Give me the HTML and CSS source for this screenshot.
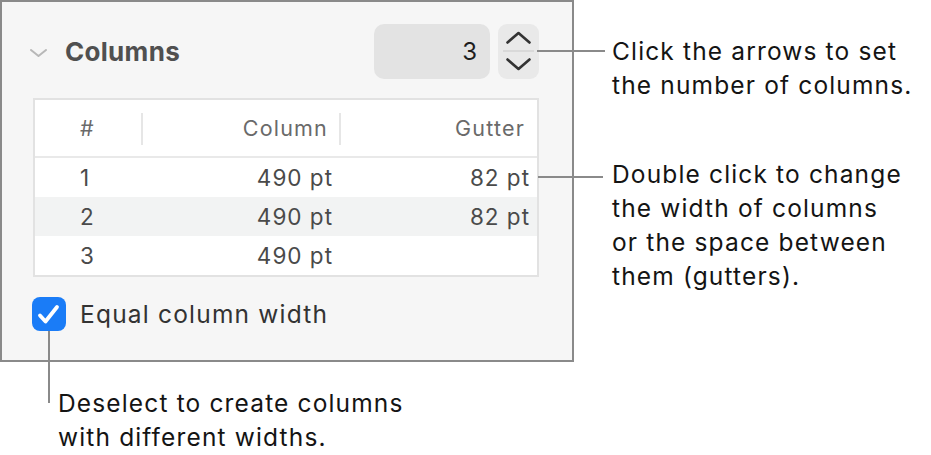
FILE: index.html
```html
<!DOCTYPE html>
<html lang="en">
<head>
<meta charset="utf-8">
<title>Columns</title>
<link rel="stylesheet" href="styles.css">
</head>
<body>
<div class="figure">
  <section class="panel">
    <div class="panel-head">
      <div class="title">
        <svg class="disclosure" width="17" height="8" viewBox="0 0 17 8"><path d="M1 1 L8.5 7 L16 1" fill="none" stroke="#b8b8b8" stroke-width="2" stroke-linecap="round" stroke-linejoin="round"/></svg>
        <h2>Columns</h2>
      </div>
      <div class="count">
        <div class="count-field">3</div>
        <div class="stepper">
          <svg width="41" height="55" viewBox="0 0 41 55">
            <path d="M9.5 18.5 L20.5 9 L31.5 18.5" fill="none" stroke="#333" stroke-width="2.6" stroke-linecap="round" stroke-linejoin="round"/>
            <line x1="5" y1="27" x2="36" y2="27" stroke="#cfcfcf" stroke-width="1.2"/>
            <path d="M9.5 35.5 L20.5 45 L31.5 35.5" fill="none" stroke="#333" stroke-width="2.6" stroke-linecap="round" stroke-linejoin="round"/>
          </svg>
        </div>
      </div>
    </div>
    <div class="table">
      <div class="thead">
        <div class="th num">#</div>
        <div class="th sep">Column</div>
        <div class="th sep">Gutter</div>
      </div>
      <div class="row">
        <div class="td num">1</div><div class="td">490 pt</div><div class="td">82 pt</div>
      </div>
      <div class="row alt">
        <div class="td num">2</div><div class="td">490 pt</div><div class="td">82 pt</div>
      </div>
      <div class="row">
        <div class="td num">3</div><div class="td">490 pt</div><div class="td"></div>
      </div>
    </div>
    <label class="check">
      <span class="box">
        <svg width="33" height="33" viewBox="0 0 33 33"><path d="M8 18.5 L13.5 24.5 L25 10" fill="none" stroke="#fff" stroke-width="3.8" stroke-linecap="round" stroke-linejoin="round"/></svg>
      </span>
      <span class="check-label">Equal column width</span>
    </label>
  </section>

  <div class="notes">
    <p class="note note-stepper">Click the arrows to set<br>the number of columns.</p>
    <p class="note note-table">Double click to change<br>the width of columns<br>or the space between<br>them (gutters).</p>
  </div>

  <p class="note note-check">Deselect to create columns<br>with different widths.</p>
</div>
</body>
</html>
```

FILE: styles.css
```css
* { box-sizing: border-box; }

html, body {
  margin: 0;
  padding: 0;
  background: #ffffff;
}

body {
  font-family: "Inter", "Noto Sans", sans-serif;
  color: #1a1a1a;
}

.figure {
  width: 931px;
  height: 455px;
  display: grid;
  grid-template-columns: 574px 1fr;
  grid-template-rows: 362px 1fr;
  overflow: hidden;
}

/* ---------- panel ---------- */
.panel {
  grid-column: 1;
  grid-row: 1;
  background: #f6f6f6;
  border: 2px solid #8a8a8a;
  padding: 22px 33px 0 28px;
}

.panel-head {
  display: flex;
  align-items: center;
  justify-content: space-between;
  height: 55px;
}

.title {
  display: flex;
  align-items: center;
}

.disclosure {
  display: block;
  margin-top: 2px;
}

.title h2 {
  margin: 0 0 0 18px;
  font-size: 26px;
  font-weight: 700;
  color: #505050;
  letter-spacing: 0.3px;
}

.count {
  display: flex;
  gap: 8px;
}

.count-field {
  width: 116px;
  height: 55px;
  border-radius: 10px;
  background: #e3e3e3;
  font-size: 24px;
  color: #1e1e1e;
  text-align: right;
  padding-right: 13px;
  line-height: 55px;
}

.stepper {
  width: 41px;
  height: 55px;
  border-radius: 9px;
  background: #e9e9e9;
}

.stepper svg { display: block; }

/* ---------- table ---------- */
.table {
  margin: 19px 0 0 3px;
  border: 2px solid #e2e2e2;
  background: #ffffff;
}

.thead,
.row {
  display: grid;
  grid-template-columns: 107px 198px 1fr;
}

.thead {
  height: 58px;
  border-bottom: 2px solid #e9e9e9;
  color: #6a6a6a;
  font-size: 21.5px;
  letter-spacing: 1.2px;
}

.th {
  display: flex;
  align-items: center;
  justify-content: flex-end;
  padding-right: 12px;
  position: relative;
}

.th.sep::before {
  content: "";
  position: absolute;
  left: -1px;
  top: 13px;
  width: 2px;
  height: 32px;
  background: #e6e6e6;
}

.row {
  height: 39px;
  color: #4a4a4a;
  font-size: 22.5px;
  letter-spacing: 1px;
}

.row.alt { background: #f2f3f3; }

.td {
  display: flex;
  align-items: center;
  justify-content: flex-end;
  padding-right: 7px;
}

.th.num,
.td.num {
  justify-content: flex-start;
  padding-left: 45px;
  padding-right: 0;
}

/* ---------- checkbox ---------- */
.check {
  display: flex;
  align-items: center;
  margin: 20px 0 0 2px;
  height: 34px;
}

.box {
  width: 34px;
  height: 34px;
  border-radius: 8px;
  background: #1a7cf7;
  display: block;
}

.box svg { display: block; }

.check-label {
  margin-left: 14px;
  font-size: 24.5px;
  letter-spacing: 1.2px;
  color: #333333;
}

/* ---------- callouts ---------- */
.notes {
  grid-column: 2;
  grid-row: 1 / 3;
  padding-left: 38px;
  padding-top: 34px;
}

.note {
  margin: 0;
  font-size: 24.5px;
  letter-spacing: 1.15px;
  line-height: 34px;
  color: #141414;
  position: relative;
  white-space: nowrap;
}

.note::before {
  content: "";
  position: absolute;
  background: #8a8a8a;
}

.note-stepper::before {
  left: -75px;
  top: 16px;
  width: 68px;
  height: 2px;
}

.note-table {
  margin-top: 55px;
}

.note-table::before {
  left: -74px;
  top: 19px;
  width: 65px;
  height: 2px;
}

.note-check {
  grid-column: 1;
  grid-row: 2;
  padding-left: 58px;
  margin-top: 24px;
}

.note-check::before {
  left: 48px;
  top: -55px;
  width: 2px;
  height: 72px;
}
```
